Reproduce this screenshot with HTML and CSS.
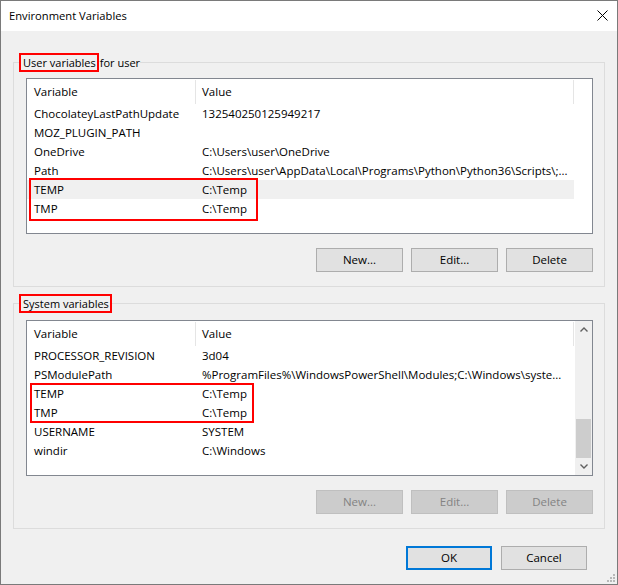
FILE: index.html
```html
<!DOCTYPE html>
<html>
<head>
<meta charset="utf-8">
<title>Environment Variables</title>
<link rel="stylesheet" href="styles.css">
</head>
<body>
<div class="window">
  <div class="titlebar">
    <span class="title">Environment Variables</span>
    <svg class="close" width="11" height="11" viewBox="0 0 11 11"><path d="M0.5 0.5 L10.5 10.5 M10.5 0.5 L0.5 10.5" stroke="#000" stroke-width="1" fill="none"/></svg>
  </div>
  <div class="content">
    <fieldset class="group">
      <legend class="legend"><span class="mark">User variables</span><span class="rest">for user</span></legend>
      <div class="group-body user-body">
        <div class="listview">
          <div class="lv-main">
            <div class="lv-header"><div class="cell c1">Variable</div><div class="cell c2">Value</div></div>
            <div class="row"><div class="c1">ChocolateyLastPathUpdate</div><div class="c2">132540250125949217</div></div>
            <div class="row"><div class="c1">MOZ_PLUGIN_PATH</div><div class="c2"></div></div>
            <div class="row"><div class="c1">OneDrive</div><div class="c2">C:\Users\user\OneDrive</div></div>
            <div class="row"><div class="c1">Path</div><div class="c2">C:\Users\user\AppData\Local\Programs\Python\Python36\Scripts\;...</div></div>
            <div class="row selected"><div class="c1">TEMP</div><div class="c2">C:\Temp</div></div>
            <div class="row"><div class="c1">TMP</div><div class="c2">C:\Temp</div></div>
          </div>
          <div class="annot annot-user"></div>
        </div>
        <div class="btn-row">
          <button class="btn">New...</button>
          <button class="btn">Edit...</button>
          <button class="btn">Delete</button>
        </div>
      </div>
    </fieldset>
    <fieldset class="group group-sys">
      <legend class="legend"><span class="mark">System variables</span></legend>
      <div class="group-body sys-body">
        <div class="listview">
          <div class="lv-main">
            <div class="lv-header"><div class="cell c1">Variable</div><div class="cell c2">Value</div></div>
            <div class="row"><div class="c1">PROCESSOR_REVISION</div><div class="c2">3d04</div></div>
            <div class="row"><div class="c1">PSModulePath</div><div class="c2">%ProgramFiles%\WindowsPowerShell\Modules;C:\Windows\syste...</div></div>
            <div class="row"><div class="c1">TEMP</div><div class="c2">C:\Temp</div></div>
            <div class="row"><div class="c1">TMP</div><div class="c2">C:\Temp</div></div>
            <div class="row"><div class="c1">USERNAME</div><div class="c2">SYSTEM</div></div>
            <div class="row"><div class="c1">windir</div><div class="c2">C:\Windows</div></div>
          </div>
          <div class="scrollbar">
            <div class="sb-btn"><svg width="8" height="5" viewBox="0 0 8 5"><path d="M0.5 4.5 L4 1 L7.5 4.5" stroke="#606060" stroke-width="1.4" fill="none"/></svg></div>
            <div class="sb-track"><div class="sb-thumb"></div></div>
            <div class="sb-btn"><svg width="8" height="5" viewBox="0 0 8 5"><path d="M0.5 0.5 L4 4 L7.5 0.5" stroke="#606060" stroke-width="1.4" fill="none"/></svg></div>
          </div>
          <div class="annot annot-sys"></div>
        </div>
        <div class="btn-row">
          <button class="btn" disabled>New...</button>
          <button class="btn" disabled>Edit...</button>
          <button class="btn" disabled>Delete</button>
        </div>
      </div>
    </fieldset>
    <div class="footer">
      <button class="btn default">OK</button>
      <button class="btn">Cancel</button>
    </div>
  </div>
  <svg class="grip" width="8" height="8" viewBox="0 0 8 8">
    <rect x="6" y="0" width="2" height="2" fill="#b8b8b8"/>
    <rect x="3" y="3" width="2" height="2" fill="#b8b8b8"/>
    <rect x="6" y="3" width="2" height="2" fill="#b8b8b8"/>
    <rect x="0" y="6" width="2" height="2" fill="#b8b8b8"/>
    <rect x="3" y="6" width="2" height="2" fill="#b8b8b8"/>
    <rect x="6" y="6" width="2" height="2" fill="#b8b8b8"/>
  </svg>
</div>
</body>
</html>
```

FILE: styles.css
```css
* { box-sizing: border-box; }
html, body { margin: 0; padding: 0; }
body {
  width: 618px;
  height: 585px;
  overflow: hidden;
  background: #fff;
  font-family: "Open Sans", "Noto Sans", sans-serif;
  font-size: 11.5px;
  color: #000;
}
.window {
  width: 618px;
  height: 585px;
  border: 1px solid #7a7a7a;
  background: #f0f0f0;
  display: flex;
  flex-direction: column;
  position: relative;
}
.titlebar {
  flex: none;
  height: 30px;
  background: #fff;
  display: flex;
  justify-content: space-between;
  align-items: flex-start;
}
.title {
  padding-left: 8px;
  line-height: 30px;
  font-size: 11.2px;
}
.close {
  margin: 9px 9px 0 0;
}
.content {
  flex: 1;
  padding: 22px 12px 0 12px;
  display: flex;
  flex-direction: column;
}
.group {
  margin: 0;
  padding: 0;
  border: 1px solid #dcdcdc;
  min-width: 0;
}
.group-sys { margin-top: 7px; }
.legend {
  margin-left: 5px;
  padding: 0;
  height: 19px;
  line-height: 19px;
  font-size: 11px;
  white-space: nowrap;
}
.mark {
  display: inline-block;
  vertical-align: top;
  height: 19px;
  line-height: 15px;
  border: 2px solid #ff0000;
  padding: 0 1px 0 2px;
}
.rest { margin-left: 1px; }
.group-body { padding: 6px 11px 14px 12px; }
.sys-body { padding-top: 7px; }
.listview {
  position: relative;
  height: 156px;
  border: 1px solid #828790;
  background: #fff;
  display: flex;
}
.lv-main {
  flex: 1;
  min-width: 0;
  overflow: hidden;
}
.lv-header {
  display: flex;
  height: 25px;
}
.lv-header .cell {
  margin-top: 1px;
  height: 24px;
  line-height: 23px;
  border-right: 1px solid #e5e5e5;
}
.c1 {
  flex: none;
  width: 169px;
  padding-left: 7px;
  overflow: hidden;
}
.c2 {
  flex: none;
  width: 378px;
  padding-left: 6px;
  overflow: hidden;
  text-overflow: ellipsis;
}
.row {
  display: flex;
  width: 547px;
  height: 19px;
  line-height: 19px;
  white-space: nowrap;
}
.row.selected { background: #f0f0f0; }
.scrollbar {
  flex: none;
  width: 17px;
  background: #f0f0f0;
  display: flex;
  flex-direction: column;
}
.sb-btn {
  flex: none;
  height: 17px;
  display: flex;
  align-items: center;
  justify-content: center;
}
.sb-track {
  flex: 1;
  display: flex;
  flex-direction: column;
  justify-content: flex-end;
}
.sb-thumb {
  height: 39px;
  margin: 0 1px;
  background: #cdcdcd;
}
.annot {
  position: absolute;
  border: 2px solid #ff0000;
  pointer-events: none;
}
.annot-user { left: 2px; top: 99px; width: 229px; height: 43px; }
.annot-sys { left: 3px; top: 62px; width: 224px; height: 40px; }
.btn-row {
  display: flex;
  justify-content: flex-end;
  gap: 8px;
  margin-top: 14px;
}
.btn {
  width: 86px;
  height: 24px;
  padding: 0;
  margin: 0;
  border: 1px solid #adadad;
  background: #e1e1e1;
  color: #000;
  font-family: inherit;
  font-size: 11.5px;
  line-height: 20px;
}
.btn-row .btn { width: 87px; }
.btn:disabled {
  background: #cccccc;
  border-color: #bfbfbf;
  color: #838383;
}
.btn.default { border: 2px solid #0078d7; }
.footer {
  display: flex;
  justify-content: flex-end;
  gap: 9px;
  margin-top: 17px;
  padding-right: 18px;
}
.grip {
  position: absolute;
  right: 2px;
  bottom: 2px;
}
```
